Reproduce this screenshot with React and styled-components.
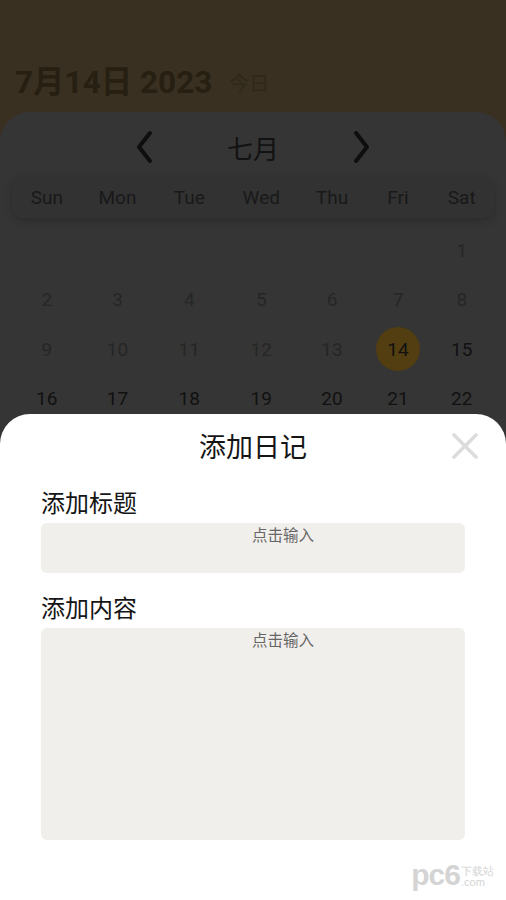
import React from "react";
import styled, { createGlobalStyle } from "styled-components";

const GlobalStyle = createGlobalStyle`
  html, body {
    margin: 0;
    padding: 0;
    background: #353535;
  }
  body {
    font-family: Roboto, "Noto Sans CJK SC", sans-serif;
  }
`;

// column widths picked so week labels and dates line up as in the app
const COLUMNS = "69.5px 72px 71.5px 72.5px 69px 63px 64.5px";

const Screen = styled.div`
  position: relative;
  width: 506px;
  height: 900px;
  overflow: hidden;
  background: #393021;
  display: flex;
  flex-direction: column;
`;

const Header = styled.div`
  height: 112px;
  box-sizing: border-box;
  padding: 53px 0 0 15px;
  display: flex;
  align-items: center;
  align-self: flex-start;
  gap: 17px;
`;

const DateTitle = styled.span`
  font-size: 31.5px;
  line-height: 44px;
  font-weight: 700;
  color: #261f12;
`;

const TodayTag = styled.span`
  font-size: 20px;
  line-height: 44px;
  color: #2f2819;
  font-family: "Noto Sans CJK SC", sans-serif;
`;

const CalendarPanel = styled.div`
  flex: 1;
  background: #353535;
  border-radius: 30px 30px 0 0;
  padding: 14px 12px 0;
  display: flex;
  flex-direction: column;
`;

const MonthRow = styled.div`
  height: 42px;
  display: flex;
  align-items: center;
  justify-content: center;
  gap: 58px;
`;

const MonthName = styled.span`
  font-family: "Noto Sans CJK SC", sans-serif;
  font-size: 26px;
  color: #121212;
  width: 76px;
  text-align: center;
`;

const ArrowButton = styled.span`
  display: flex;
  width: 24px;
  justify-content: center;
`;

const WeekBar = styled.div`
  margin-top: 9px;
  height: 41px;
  border-radius: 10px;
  background: #323232;
  box-shadow: 0 3px 8px rgba(0, 0, 0, 0.18);
  display: grid;
  grid-template-columns: ${COLUMNS};
  align-items: center;
`;

const WeekLabel = styled.span`
  text-align: center;
  font-size: 19px;
  color: #191919;
  margin-top: -1px;
`;

const DaysGrid = styled.div`
  margin-top: 8px;
  display: grid;
  grid-template-columns: ${COLUMNS};
  grid-auto-rows: 49.3px;
  align-items: center;
  justify-items: center;
`;

const DayCell = styled.span`
  width: 44px;
  height: 44px;
  border-radius: 50%;
  display: flex;
  align-items: center;
  justify-content: center;
  font-size: 19px;
  color: ${(p) => (p.$past ? "#262626" : "#111111")};
  background: ${(p) => (p.$selected ? "#523e10" : "transparent")};
`;

const Sheet = styled.div`
  position: absolute;
  left: 0;
  right: 0;
  top: 414px;
  bottom: 0;
  background: #ffffff;
  border-radius: 30px 30px 0 0;
  padding: 0 41px;
  display: flex;
  flex-direction: column;
  font-family: "Noto Sans CJK SC", sans-serif;
`;

const SheetHeader = styled.div`
  position: relative;
  height: 64px;
  display: flex;
  align-items: center;
  justify-content: center;
`;

const SheetTitle = styled.span`
  font-size: 27px;
  color: #151515;
  margin-top: -2px;
`;

const CloseButton = styled.span`
  position: absolute;
  right: -13px;
  top: 19px;
  display: flex;
`;

const FieldLabel = styled.div`
  font-size: 24px;
  color: #151515;
  margin-top: ${(p) => p.$top}px;
  line-height: 30px;
`;

const InputBox = styled.div`
  margin-top: ${(p) => p.$gap}px;
  height: ${(p) => p.$h}px;
  background: #f1efeb;
  border-radius: 6px;
  box-sizing: border-box;
  padding: 0 0 0 211px;
  font-size: 15.5px;
  color: #666666;
  line-height: 22px;
`;

const Watermark = styled.div`
  position: absolute;
  right: 12px;
  bottom: 12px;
  display: flex;
  align-items: flex-end;
  font-family: "Liberation Sans", sans-serif;
  color: #d4d4d4;
  font-weight: 700;
`;

const MarkBig = styled.span`
  font-size: 30px;
  line-height: 26px;
  letter-spacing: -1px;
`;

const MarkSide = styled.span`
  display: flex;
  flex-direction: column;
  margin-left: 1px;
  font-size: 11px;
  font-weight: 400;
  line-height: 11px;
`;

const Chevron = ({ dir }) => (
  <svg width="20" height="34" viewBox="0 0 20 34">
    <path
      d={dir === "left" ? "M15 3 L4 17 L15 31" : "M5 3 L16 17 L5 31"}
      fill="none"
      stroke="#0e0e0e"
      strokeWidth="4"
      strokeLinecap="round"
      strokeLinejoin="round"
    />
  </svg>
);

const CloseIcon = () => (
  <svg width="26" height="26" viewBox="0 0 26 26">
    <path
      d="M2 2 L24 24 M24 2 L2 24"
      stroke="#dcdcdc"
      strokeWidth="3.6"
      strokeLinecap="round"
    />
  </svg>
);

const weekDays = ["Sun", "Mon", "Tue", "Wed", "Thu", "Fri", "Sat"];

const days = [
  ...Array(6).fill(null),
  ...Array.from({ length: 22 }, (_, i) => i + 1)
];

const App = () => (
  <Screen>
    <GlobalStyle />
    <Header>
      <DateTitle>7月14日 2023</DateTitle>
      <TodayTag>今日</TodayTag>
    </Header>

    <CalendarPanel>
      <MonthRow>
        <ArrowButton>
          <Chevron dir="left" />
        </ArrowButton>
        <MonthName>七月</MonthName>
        <ArrowButton>
          <Chevron dir="right" />
        </ArrowButton>
      </MonthRow>

      <WeekBar>
        {weekDays.map((d) => (
          <WeekLabel key={d}>{d}</WeekLabel>
        ))}
      </WeekBar>

      <DaysGrid>
        {days.map((d, i) =>
          d ? (
            <DayCell key={i} $past={d < 14} $selected={d === 14}>
              {d}
            </DayCell>
          ) : (
            <span key={i} />
          )
        )}
      </DaysGrid>
    </CalendarPanel>

    <Sheet>
      <SheetHeader>
        <SheetTitle>添加日记</SheetTitle>
        <CloseButton>
          <CloseIcon />
        </CloseButton>
      </SheetHeader>

      <FieldLabel $top={9}>添加标题</FieldLabel>
      <InputBox $h={50} $gap={6}>点击输入</InputBox>

      <FieldLabel $top={19}>添加内容</FieldLabel>
      <InputBox $h={212} $gap={6}>点击输入</InputBox>

      <Watermark>
        <MarkBig>pc6</MarkBig>
        <MarkSide>
          <span>下载站</span>
          <span>.com</span>
        </MarkSide>
      </Watermark>
    </Sheet>
  </Screen>
);

export default App;
